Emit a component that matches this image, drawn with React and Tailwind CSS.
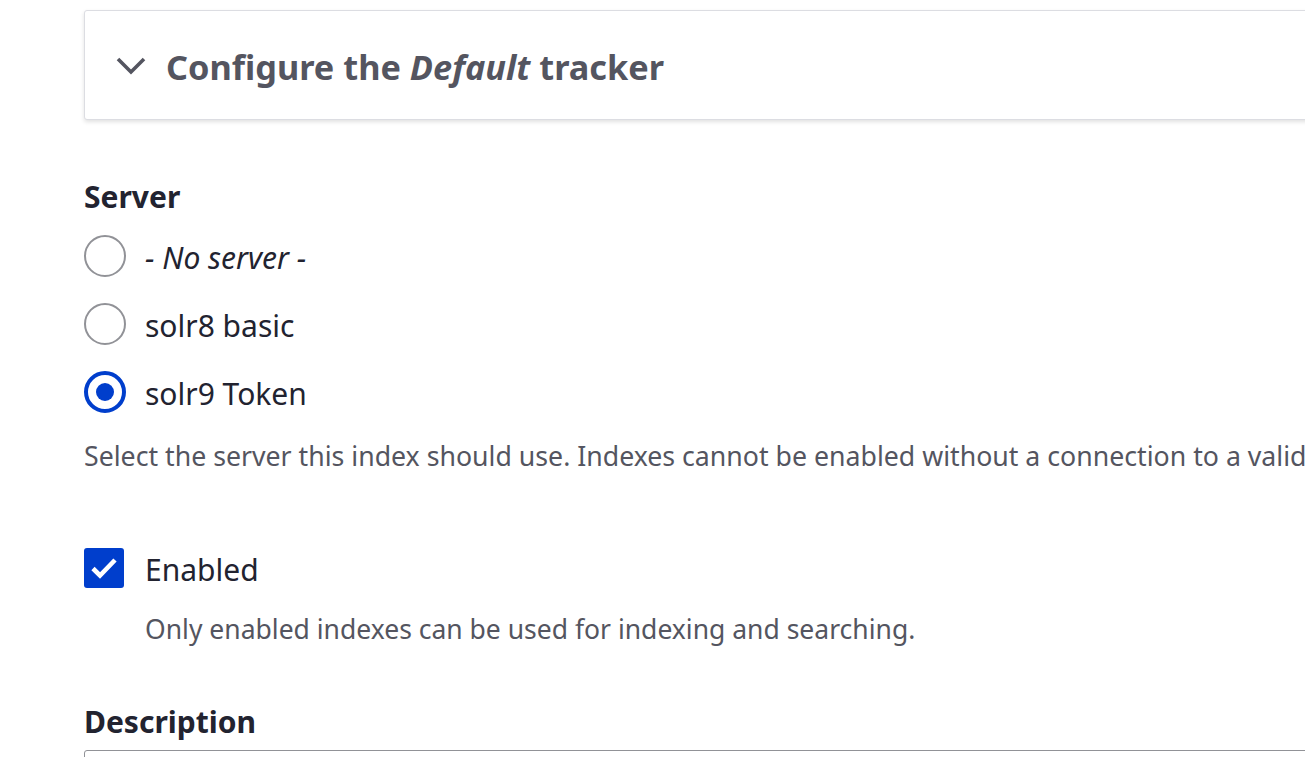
const font = { fontFamily: '"Noto Sans", "Open Sans", sans-serif' };

const Radio = ({ checked, children }) => (
	<label className="flex h-[68px] items-center">
		{checked ? (
			<span className="flex h-[42px] w-[42px] shrink-0 items-center justify-center rounded-full border-[4px] border-[#003ecc] bg-white">
				<span className="h-[18px] w-[18px] rounded-full bg-[#003ecc]" />
			</span>
		) : (
			<span className="h-[42px] w-[42px] shrink-0 rounded-full border-2 border-[#919297] bg-white" />
		)}
		<span className="ml-[19px] mt-[4px] text-[30px] leading-[38px] text-[#222330]">{children}</span>
	</label>
);

export default function App() {
	return (
		<div className="h-screen overflow-hidden bg-white pl-[84px] pt-[10px]" style={font}>
			{/* collapsible tracker panel, runs off the right edge */}
			<div className="flex h-[110px] w-[1300px] items-center rounded-[3px] border border-[#dcdde2] bg-white pl-[30px] shadow-[0_2px_4px_rgba(0,0,0,0.12)]">
				<svg width="32" height="20" viewBox="0 0 32 20" fill="none" className="mt-[1px]">
					<path d="M3 3l13 13L29 3" stroke="#545560" strokeWidth="3.6" />
				</svg>
				<h2 className="ml-[19px] mt-[3px] text-[34.3px] font-bold leading-[42px] text-[#545560]">
					Configure the <em>Default</em> tracker
				</h2>
			</div>

			<div className="mt-[58px] text-[30px] font-bold leading-[38px] text-[#222330]">Server</div>
			<div className="mt-[6px]">
				<Radio>
					<em>- No server -</em>
				</Radio>
				<Radio>solr8 basic</Radio>
				<Radio checked>solr9 Token</Radio>
			</div>
			<p className="mt-[12px] whitespace-nowrap text-[26.7px] leading-[36px] text-[#545560]">
				Select the server this index should use. Indexes cannot be enabled without a connection to a valid
			</p>

			<label className="mt-[74px] flex h-[40px] items-center">
				<span className="flex h-[40px] w-[40px] items-center justify-center rounded-[3px] bg-[#003ecc]">
					<svg width="30" height="26" viewBox="0 0 30 26" fill="none">
						<path d="M4 13.5l7 7L26 5" stroke="white" strokeWidth="4.6" />
					</svg>
				</span>
				<span className="ml-[21px] mt-[4px] text-[30px] leading-[38px] text-[#222330]">Enabled</span>
			</label>
			<p className="ml-[61px] mt-[23px] text-[26.5px] leading-[36px] text-[#545560]">
				Only enabled indexes can be used for indexing and searching.
			</p>

			<div className="mt-[56px] text-[30px] font-bold leading-[38px] text-[#222330]">Description</div>
			<div className="mt-[9px] h-[60px] w-[1300px] rounded-[3px] border border-[#919297] bg-white" />
		</div>
	);
}
